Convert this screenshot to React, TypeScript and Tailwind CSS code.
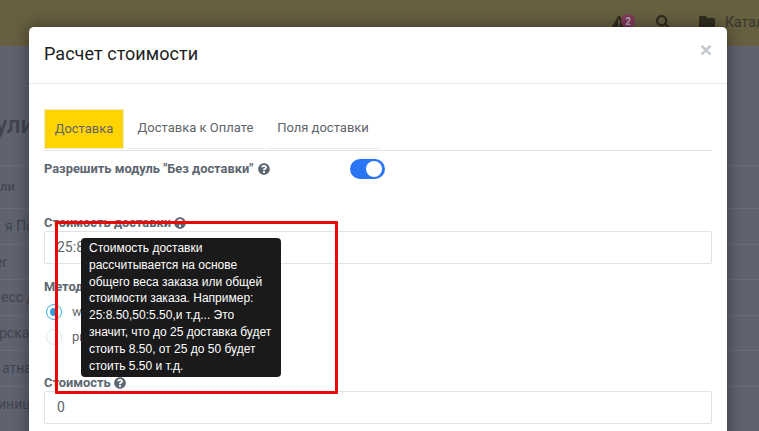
import React from "react";
import { FaExclamationTriangle, FaSearch, FaFolder, FaQuestionCircle } from "react-icons/fa";

const Help = () => <FaQuestionCircle className="inline-block shrink-0 text-[12px] text-[#5c6670]" />;

const sideRows = [
  { t: "я Почта", c: "ml-[5px]" },
  { t: "er", c: "-ml-[5px]" },
  { t: "есс доставка", c: "ml-[1px]" },
  { t: "рская", c: "-ml-[1px]" },
  { t: "атная", c: "ml-[2px]" },
  { t: "иница", c: "-ml-[2px]" },
];

export default function App() {
  return (
    <div className="relative h-[431px] w-[759px] overflow-hidden bg-[#5f6370] font-['Roboto',sans-serif]">
      <div className="flex h-[46px] items-start bg-[#665f40] pl-[612px] pt-[14px] text-[#2f2c20]">
        <div className="flex h-[16px] items-center whitespace-nowrap">
          <div className="relative h-[14px] w-[16px]">
            <FaExclamationTriangle className="text-[14px]" />
            <span className="absolute -top-[1px] left-[9px] flex h-[14px] w-[14px] items-center justify-center rounded-full bg-[#83395a] text-[10px] font-bold text-[#b5a8b5]">2</span>
          </div>
          <FaSearch className="ml-[28px] text-[14px]" />
          <FaFolder className="ml-[29px] text-[16px]" />
          <span className="ml-[10px] text-[14px] text-[#38362c]">Каталог</span>
        </div>
      </div>
      <div className="pt-[63px] text-[#41444f]">
        <div className="-ml-[53px] text-[24px] font-medium leading-[32px]">Модули</div>
        <div className="mt-[24px] h-[43px] border-t border-[#696c79] text-[13px] font-bold leading-[41px] text-[#474a55]">ли</div>
        {sideRows.map((r) => (
          <div key={r.t} className="h-[35.6px] border-t border-[#696c79] text-[14px] leading-[35px] whitespace-nowrap">
            <div className={r.c}>{r.t}</div>
          </div>
        ))}
      </div>

      <div className="absolute left-[29px] top-[27px] h-[420px] w-[698px] rounded-t-[5px] bg-white shadow-[0_0_16px_rgba(0,0,0,0.45)]">
        <div className="flex h-[57px] items-start justify-between border-b border-[#e5e8ea] px-[15px] pt-[15px]">
          <h4 className="text-[18px] leading-[24px] tracking-[0.05px] text-[#1c1e21]">Расчет стоимости</h4>
          <span className="mt-[-4px] font-['Liberation_Sans',sans-serif] text-[21px] font-bold leading-[24px] text-[#c4c6c8]">×</span>
        </div>
        <div className="px-[15px] pt-[25px]">
          <div className="flex h-[42px] items-stretch border-b border-[#e1e4e6] text-[13px] text-[#5f6569]">
            <div className="mb-[1.5px] flex w-[80px] items-center justify-center border border-[#ecebc8] bg-[#ffd400] pb-[1px]">Доставка</div>
            <div className="mb-[1.5px] ml-[3px] flex w-[137px] items-center justify-center border-b border-[#e8eaec] pb-[1px]">Доставка к Оплате</div>
            <div className="mb-[1.5px] ml-[3px] flex w-[112px] items-center justify-center border-b border-[#e8eaec] pb-[1px]">Поля доставки</div>
          </div>
          <div className="mt-[6px] flex h-[24px] items-center">
            <label className="flex w-[306px] items-center gap-[5px] text-[12.85px] font-bold text-[#5c6670]">
              Разрешить модуль "Без доставки" <Help />
            </label>
            <div className="flex h-[20px] w-[35px] items-center justify-end rounded-full bg-[#2a75f3] pr-[3px]">
              <div className="h-[16px] w-[16px] rounded-full bg-white" />
            </div>
          </div>
          <label className="mt-[34px] flex h-[16px] items-center gap-[3px] text-[12.85px] font-bold text-[#5c6670]">Стоимость доставки <Help /></label>
          <div className="flex h-[33px] items-center rounded-[2px] border border-[#dfe3e6] px-[12px] text-[14px] text-[#5f6569]">25:8.50,50:5.50,10000:0.00</div>
          <label className="mt-[15px] flex h-[16px] items-center gap-[3px] text-[12.85px] font-bold text-[#5c6670]">Метод расчета <Help /></label>
          <div className="mt-[4px] flex h-[25px] items-center gap-[10px] pl-[2px] text-[13px] text-[#5f6569]">
            <div className="flex h-[16px] w-[16px] items-center justify-center rounded-full border-[1.5px] border-[#35b0d8]">
              <div className="h-[8px] w-[8px] rounded-full bg-[#2f9fd8]" />
            </div>
            weight
          </div>
          <div className="flex h-[25px] items-center gap-[10px] pl-[2px] text-[13px] text-[#5f6569]">
            <div className="h-[16px] w-[16px] rounded-full border border-[#dfe3e6]" />
            price
          </div>
          <label className="mt-[26px] flex h-[16px] items-center gap-[3px] text-[12.85px] font-bold text-[#5c6670]">Стоимость <Help /></label>
          <div className="flex h-[33px] items-center rounded-[2px] border border-[#dfe3e6] px-[12px] text-[14px] text-[#5f6569]">0</div>
        </div>
      </div>

      <div className="absolute left-[81px] top-[238px] w-[200px] rounded-[4px] bg-[#1a1a1a] px-[8px] pb-[3px] pt-[2px] font-['Liberation_Sans',sans-serif] text-[12px] leading-[16.8px] text-white">
        Стоимость доставки рассчитывается на основе общего веса заказа или общей стоимости заказа. Например: 25:8.50,50:5.50,и т.д... Это значит, что до 25 доставка будет стоить 8.50, от 25 до 50 будет стоить 5.50 и т.д.
      </div>
      <div className="absolute left-[55px] top-[221px] h-[173px] w-[283px] rounded-[1px] border-[3px] border-[#e80808]" />
    </div>
  );
}
